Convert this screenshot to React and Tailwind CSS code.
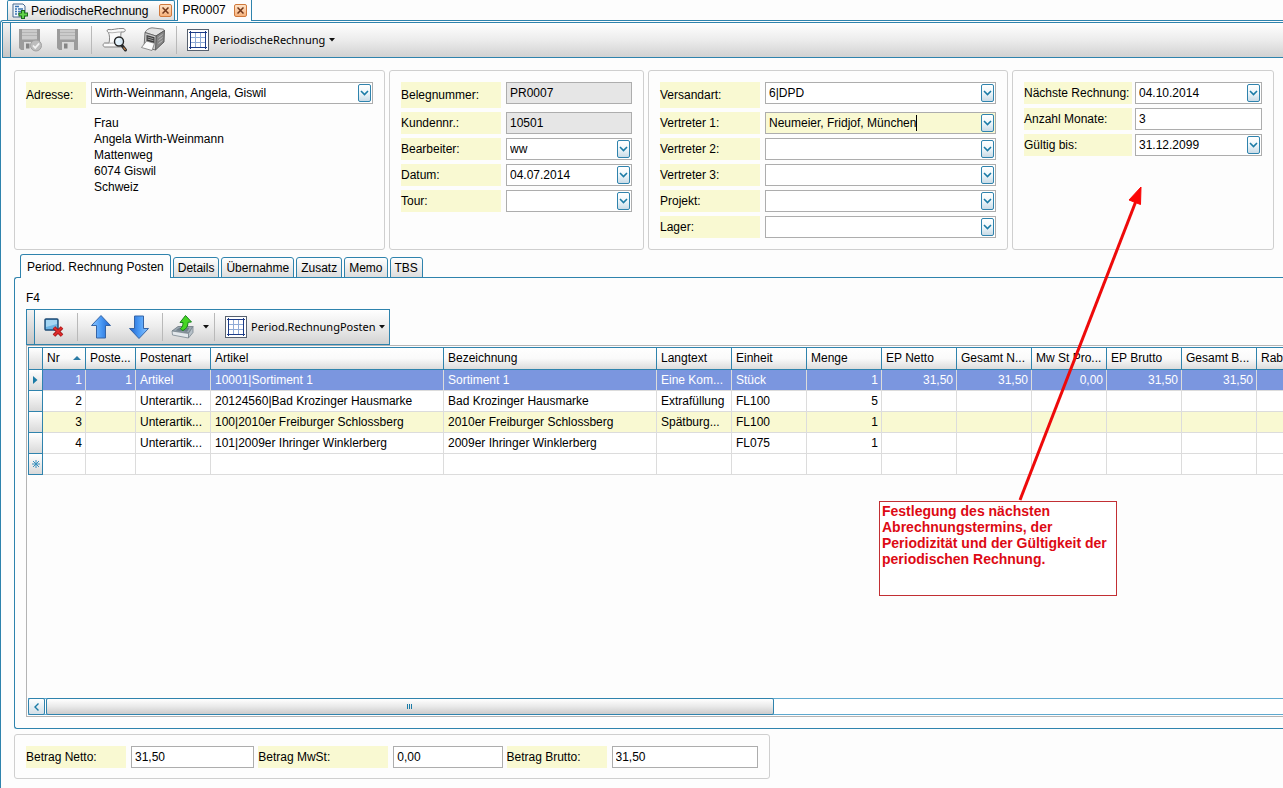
import { useState } from 'react';
import clsx from 'clsx';

const COLUMNS = [
  { key: 'nr', label: 'Nr', width: 43, right: true, sorted: true },
  { key: 'posten', label: 'Poste...', width: 50, right: true },
  { key: 'art', label: 'Postenart', width: 75 },
  { key: 'artikel', label: 'Artikel', width: 233 },
  { key: 'bezeichnung', label: 'Bezeichnung', width: 213 },
  { key: 'langtext', label: 'Langtext', width: 75 },
  { key: 'einheit', label: 'Einheit', width: 75 },
  { key: 'menge', label: 'Menge', width: 75, right: true },
  { key: 'epNetto', label: 'EP Netto', width: 75, right: true },
  { key: 'gesamtNetto', label: 'Gesamt N...', width: 75, right: true },
  { key: 'mwst', label: 'Mw St Pro...', width: 75, right: true },
  { key: 'epBrutto', label: 'EP Brutto', width: 75, right: true },
  { key: 'gesamtBrutto', label: 'Gesamt B...', width: 75, right: true },
  { key: 'rabatt', label: 'Rab', width: 75, right: true },
];

const ROWS = [
  {
    nr: '1',
    posten: '1',
    art: 'Artikel',
    artikel: '10001|Sortiment 1',
    bezeichnung: 'Sortiment 1',
    langtext: 'Eine Kom...',
    einheit: 'Stück',
    menge: '1',
    epNetto: '31,50',
    gesamtNetto: '31,50',
    mwst: '0,00',
    epBrutto: '31,50',
    gesamtBrutto: '31,50',
  },
  {
    nr: '2',
    art: 'Unterartik...',
    artikel: '20124560|Bad Krozinger Hausmarke',
    bezeichnung: 'Bad Krozinger Hausmarke',
    langtext: 'Extrafüllung',
    einheit: 'FL100',
    menge: '5',
  },
  {
    nr: '3',
    art: 'Unterartik...',
    artikel: '100|2010er Freiburger Schlossberg',
    bezeichnung: '2010er Freiburger Schlossberg',
    langtext: 'Spätburg...',
    einheit: 'FL100',
    menge: '1',
  },
  {
    nr: '4',
    art: 'Unterartik...',
    artikel: '101|2009er Ihringer Winklerberg',
    bezeichnung: '2009er Ihringer Winklerberg',
    einheit: 'FL075',
    menge: '1',
  },
];

const TABS = ['Period. Rechnung Posten', 'Details', 'Übernahme', 'Zusatz', 'Memo', 'TBS'];

/* ---------- Icons ---------- */

function Floppy({ checked }) {
  return (
    <svg width="24" height="24" viewBox="0 0 24 24">
      <path d="M1 1h21v21H3l-2-2z" fill="#9c9c9c" />
      <path d="M4 1.500h15v10H4z" fill="#cbcbcb" />
      <path d="M4 4.500h15M4 7.500h15" stroke="#b5b5b5" />
      <path d="M6 14h12v8H6z" fill="#dadada" />
      <path d="M8 15.500h3.500v5H8z" fill="#858585" />
      {checked && (
        <>
          <circle cx="18" cy="17.500" r="5.500" fill="#bdbdbd" stroke="#a2a2a2" />
          <path d="M15 17.500l2.200 2.300 4-4.500" fill="none" stroke="#f2f2f2" strokeWidth="1.800" />
        </>
      )}
    </svg>
  );
}

function PreviewIcon() {
  return (
    <svg width="26" height="26" viewBox="0 0 26 26">
      <path
        d="M6 2.500c4 1 9-1.500 15-1 3 .3 3 3.500 0 3.500h-2c-.5 5 0 9 .5 15H4c-3 .5-4-2.500-1.500-4h4.500C8 12 7.500 8 6.500 5.500c-1.800-.8-1.800-2.500-.5-3z"
        fill="#fafafa"
        stroke="#858585"
      />
      <path d="M7 5.500c4 1 8-.8 12-.5M2.500 16c4 .5 6 0 10 0" stroke="#b3b3b3" fill="none" />
      <path d="M20 18.500l3.500 4.500" stroke="#2b2b2b" strokeWidth="3" strokeLinecap="round" />
      <path d="M21.500 20.500l2 2.500" stroke="#d98a4a" strokeWidth="1.200" />
      <circle cx="17" cy="14.500" r="4.500" fill="#dceefb" fillOpacity=".85" stroke="#222" strokeWidth="1.400" />
      <path d="M14.800 14a2.300 2.300 0 012-1.900" stroke="#fff" fill="none" />
    </svg>
  );
}

function PrinterIcon() {
  return (
    <svg width="26" height="26" viewBox="0 0 26 26">
      <path d="M5 5.500C6 3 9 1 12 .8L22 2c1.500 0 2.500.8 2.500 1.500L16 9z" fill="#e2e2e2" stroke="#666" strokeWidth=".8" />
      <path d="M16 9l8.500-5.500L24 15l-8.500 8z" fill="#858585" stroke="#4a4a4a" strokeWidth=".8" />
      <path d="M5 5.500L16 9l-.5 14L4 20z" fill="#c9c9c9" stroke="#555" strokeWidth=".8" />
      <path d="M6.500 8l8 2.300v6l-8-2z" fill="#3a3a3a" />
      <path d="M7.500 10l6 1.700M7.500 12l6 1.700" stroke="#b5b5b5" strokeWidth=".8" />
      <path d="M6.500 14l8 2.300-2.500 7.200-10.500-3z" fill="#fbfbfb" stroke="#777" strokeWidth=".8" />
      <path d="M18.500 10.500l4-3M18.500 13.500l4-3M18.500 16.500l4-3" stroke="#b9b9b9" />
    </svg>
  );
}

function GridIcon() {
  return (
    <svg width="22" height="22" viewBox="0 0 22 22">
      <rect x=".5" y=".5" width="21" height="21" fill="#fff" stroke="#56606e" />
      <path d="M8.500 4v14M13.500 4v14M4 8.500h14M4 13.500h14" stroke="#8fabd6" />
      <path d="M3.500 2v18M18.500 2v18M2 3.500h18M2 18.500h18" stroke="#1d3c87" />
    </svg>
  );
}

function SheetIcon() {
  return (
    <svg width="16" height="16" viewBox="0 0 16 16">
      <path d="M1 1h10l2 2v11H1z" fill="#f3f8fd" stroke="#47688f" />
      <path d="M3 3.500h4M3 6h2M6 6h5M3 8.500h2M6 8.500h5M3 11h2M6 11h3" stroke="#3d76b3" strokeWidth="1.300" />
      <path d="M11 7v9M6.500 11.500H16" stroke="#1d6b1d" strokeWidth="4" />
      <path d="M11 8v7M7.500 11.500H15" stroke="#62d34a" strokeWidth="2" />
    </svg>
  );
}

function RemoveIcon() {
  return (
    <svg width="22" height="20" viewBox="0 0 22 20">
      <rect x="2" y="2" width="13" height="11" rx="1" fill="#6cb4e4" stroke="#1c4a74" strokeWidth="1.400" />
      <path d="M3 3h11v4L3 10z" fill="#a5d6f3" />
      <path d="M11 10.500l8 8M19 10.500l-8 8" stroke="#8d0f12" strokeWidth="3.600" />
      <path d="M11 10.500l8 8M19 10.500l-8 8" stroke="#dd2a2a" strokeWidth="2.200" />
    </svg>
  );
}

function BigArrow({ down }) {
  return (
    <svg width="22" height="26" viewBox="0 0 22 26" className={clsx(down && 'rotate-180')}>
      <defs>
        <linearGradient id="blueArrow" x1="0" x2="1" y1="0" y2="0">
          <stop offset="0" stopColor="#8cc6ff" />
          <stop offset=".5" stopColor="#4a9af5" />
          <stop offset="1" stopColor="#1f62cc" />
        </linearGradient>
      </defs>
      <path d="M11 1.500l9.500 10H15.500V24h-9V11.500H1.500z" fill="url(#blueArrow)" stroke="#3464a6" strokeLinejoin="round" />
    </svg>
  );
}

function ExportIcon() {
  return (
    <svg width="24" height="26" viewBox="0 0 24 26">
      <path d="M1 17l6-4.500h15L17.500 19z" fill="#9aa7b1" stroke="#6c7882" strokeWidth=".8" />
      <path d="M4.500 16.500l4-2.700h10l-2.500 4z" fill="#71808b" />
      <path d="M1 17l16.500 2.500v4.500L1.500 21z" fill="#e3e8ec" stroke="#7a868f" strokeWidth=".8" />
      <path d="M17.500 19.500L22 12.500v6L17.500 24z" fill="#b7c1c9" stroke="#7a868f" strokeWidth=".8" />
      <path d="M14.500 1.500l6 6.500-3.500.3c0 4-1.500 6.500-5 8.200-1.500-.5-2-1-2.500-2 2-1.500 2.500-3.500 2.500-6H9z" fill="#45d524" stroke="#17821a" />
    </svg>
  );
}

function CaretDown() {
  return (
    <svg width="6" height="4" viewBox="0 0 6 4">
      <path d="M0 0h6L3 3.500z" fill="#111" />
    </svg>
  );
}

function Chevron() {
  return (
    <svg width="9" height="6" viewBox="0 0 9 6">
      <path d="M1 1l3.500 3.500L8 1" fill="none" stroke="#1b7ba6" strokeWidth="1.600" />
    </svg>
  );
}

/* ---------- Form parts ---------- */

const dropClass =
  'flex h-[18px] w-[13px] shrink-0 items-center justify-center rounded-[2px] border border-[#2f83ad] bg-gradient-to-b from-white via-[#eef6fa] to-[#c9dbe6]';

function Field({ id, label, value = '', kind = 'text', labelClass = 'w-[100px]', gap = 'gap-[5px]', tall, active }) {
  return (
    <div className={clsx('flex items-start', gap)}>
      <label
        htmlFor={id}
        className={clsx('flex shrink-0 items-center whitespace-nowrap bg-[#f9f9d2]', labelClass, tall ? 'h-[26px]' : 'h-[22px]')}
      >
        {label}
      </label>
      <div
        className={clsx(
          'relative flex h-[22px] min-w-0 flex-1 items-center border border-[#adadad] pr-px',
          active ? 'bg-[#f9f9d2]' : kind === 'readonly' ? 'bg-[#e6e6e6]' : 'bg-white'
        )}
      >
        {kind === 'select' && (
          <>
            <select id={id} defaultValue={value} className="h-5 w-full appearance-none bg-transparent pl-[3px] pr-4 outline-none">
              <option>{value}</option>
            </select>
            <span className={clsx(dropClass, 'pointer-events-none absolute right-px')}>
              <Chevron />
            </span>
          </>
        )}
        {kind !== 'select' && (
          <input
            id={id}
            defaultValue={value}
            readOnly={kind === 'readonly'}
            className={clsx('h-5 min-w-0 bg-transparent pl-[3px] outline-none', active ? 'field-sizing-content' : 'w-full flex-1')}
          />
        )}
        {active && <span className="mr-auto h-4 w-px bg-black" />}
        {kind === 'combo' && (
          <button type="button" aria-label={`${label} öffnen`} className={dropClass}>
            <Chevron />
          </button>
        )}
      </div>
    </div>
  );
}

function Panel({ children, className }) {
  return <section className={clsx('min-w-0 rounded-[3px] border border-[#cfcfcf] p-[11px]', className)}>{children}</section>;
}

function Separator() {
  return <span className="mx-1 h-7 w-px bg-[#b9b9b9]" />;
}

function ToolButton({ label, children }) {
  return (
    <button type="button" aria-label={label} className="flex h-8 w-[38px] items-center justify-center">
      {children}
    </button>
  );
}

function LayoutButton({ children }) {
  return (
    <button type="button" className="flex h-8 items-center gap-1 pl-1.5 pr-1 font-['Noto_Sans','Open_Sans',sans-serif] text-[11px]">
      <GridIcon />
      <span>{children}</span>
      <CaretDown />
    </button>
  );
}

function Toolbar({ children, className }) {
  return (
    <div className={clsx('flex h-9 items-center border-[#2f83ad] bg-gradient-to-b from-white via-[#ececec] to-[#d2d2d2]', className)}>
      <span className="h-full w-2 shrink-0 border-r border-[#2f83ad] bg-gradient-to-b from-[#f2f2f2] to-[#c6c6c6]" />
      {children}
    </div>
  );
}

function CloseButton({ name }) {
  return (
    <button
      type="button"
      aria-label={`${name} schließen`}
      className="flex size-[13px] items-center justify-center rounded-[2px] border border-[#d0793c] bg-gradient-to-b from-[#ffe3c7] to-[#f6b27c]"
    >
      <svg width="7" height="7" viewBox="0 0 7 7">
        <path d="M.5.5l6 6M6.500.5l-6 6" stroke="#71371a" strokeWidth="1.500" />
      </svg>
    </button>
  );
}

/* ---------- Posten table ---------- */

const rowHeadClass = 'border-b border-x border-[#2f83ad] bg-gradient-to-b from-white to-[#d9d9d9] p-0';

function PostenTable() {
  const [selected, setSelected] = useState(0);

  return (
    <table className="w-[1304px] table-fixed border-separate border-spacing-0">
      <colgroup>
        <col className="w-[15px]" />
        {COLUMNS.map((c) => (
          <col key={c.key} style={{ width: c.width }} />
        ))}
      </colgroup>
      <thead>
        <tr className="h-[23px]">
          <th className={clsx(rowHeadClass, 'border-t')} />
          {COLUMNS.map((c) => (
            <th
              key={c.key}
              scope="col"
              className="overflow-hidden whitespace-nowrap border-y border-r border-[#2f83ad] bg-gradient-to-b from-white via-[#fafafa] to-[#dcdcdc] px-1 pb-px pt-0 text-left font-normal"
            >
              <span className="flex items-center justify-between">
                {c.label}
                {c.sorted && (
                  <svg width="8" height="4" viewBox="0 0 8 4">
                    <path d="M0 4l4-4 4 4z" fill="#2b7ba5" />
                  </svg>
                )}
              </span>
            </th>
          ))}
        </tr>
      </thead>
      <tbody>
        {ROWS.map((row, i) => (
          <tr
            key={row.nr}
            onClick={() => setSelected(i)}
            className={clsx('h-[21px]', selected === i ? 'bg-[#7b96df] text-white' : i % 2 === 0 ? 'bg-[#f9f9d2]' : 'bg-white')}
          >
            <td className={rowHeadClass}>
              {selected === i && (
                <svg width="5" height="8" viewBox="0 0 5 8" className="mx-auto">
                  <path d="M0 0l4.500 4L0 8z" fill="#1b7ba6" />
                </svg>
              )}
            </td>
            {COLUMNS.map((c) => (
              <td
                key={c.key}
                className={clsx('overflow-hidden whitespace-nowrap border-b border-r border-[#dcdcdc] py-0 pl-1 pr-[3px]', c.right && 'text-right')}
              >
                {row[c.key]}
              </td>
            ))}
          </tr>
        ))}
        <tr className="h-[21px] bg-white">
          <td className={rowHeadClass}>
            <svg width="8" height="8" viewBox="0 0 8 8" className="mx-auto">
              <path d="M4 0v8M0 4h8M1 1l6 6M7 1L1 7" stroke="#3a90bd" />
            </svg>
          </td>
          {COLUMNS.map((c) => (
            <td key={c.key} className="border-b border-r border-[#dcdcdc] p-0" />
          ))}
        </tr>
      </tbody>
    </table>
  );
}

function ScrollBar() {
  return (
    <div className="flex h-[17px] border-y border-[#5fa9cf] bg-white">
      <button
        type="button"
        aria-label="Nach links"
        className="-my-px flex w-[17px] items-center justify-center rounded-[2px] border border-[#2f83ad] bg-gradient-to-b from-white to-[#d2dfe7]"
      >
        <svg width="5" height="8" viewBox="0 0 5 8">
          <path d="M4.500.5L1 4l3.500 3.500" fill="none" stroke="#1b7ba6" strokeWidth="1.400" />
        </svg>
      </button>
      <div className="-my-px ml-px flex w-[58%] items-center justify-center gap-px rounded-[2px] border border-[#2f83ad] bg-gradient-to-b from-white via-[#e9e9e9] to-[#cccccc]">
        <span className="h-[5px] w-px bg-[#1b7ba6]" />
        <span className="h-[5px] w-px bg-[#1b7ba6]" />
        <span className="h-[5px] w-px bg-[#1b7ba6]" />
      </div>
    </div>
  );
}

/* ---------- Note with arrow ---------- */

function Note() {
  return (
    <aside className="pointer-events-none absolute left-[879px] top-[185px] w-[270px]">
      <svg width="270" height="316" viewBox="0 0 270 316">
        <path d="M141 315L257 16" stroke="#ee0a0a" strokeWidth="3" />
        <path d="M262 2l-12 13 11.500 4.500z" fill="#fb0505" stroke="#fb0505" />
      </svg>
      <p className="h-[95px] w-[238px] whitespace-nowrap border border-[#c22f33] bg-white px-[2px] pt-px text-[14px] font-bold leading-4 text-[#dd0a14]">
        Festlegung des nächsten
        <br />
        Abrechnungstermins, der
        <br />
        Periodizität und der Gültigkeit der
        <br />
        periodischen Rechnung.
      </p>
    </aside>
  );
}

export default function App() {
  const [tab, setTab] = useState(TABS[0]);

  return (
    <div className="relative flex min-h-screen flex-col overflow-hidden bg-[#fdfdfd] font-['Liberation_Sans',Arial,sans-serif] text-[12px] leading-4 text-black">
      {/* Document tabs */}
      <nav className="flex h-5 items-stretch gap-[2px] pl-[7px]">
        <div className="flex items-center gap-[3px] rounded-t-[2px] border-x border-t border-[#2f83ad] bg-gradient-to-b from-white to-[#dedede] pl-1 pr-[2px]">
          <SheetIcon />
          <button type="button" className="mr-2">PeriodischeRechnung</button>
          <CloseButton name="PeriodischeRechnung" />
        </div>
        <div className="relative z-10 -mb-px flex items-center gap-2 border-x border-[#2f83ad] bg-[#fdfdfd] px-1 pb-px">
          <button type="button">PR0007</button>
          <CloseButton name="PR0007" />
        </div>
      </nav>

      <main className="flex flex-1 flex-col rounded-tl-[3px] border-l border-t border-[#2f83ad] pb-[9px] pl-px pt-px">
        <Toolbar className="border-y border-l">
          <ToolButton label="Speichern und schließen">
            <Floppy checked />
          </ToolButton>
          <ToolButton label="Speichern">
            <Floppy />
          </ToolButton>
          <Separator />
          <ToolButton label="Vorschau">
            <PreviewIcon />
          </ToolButton>
          <ToolButton label="Drucken">
            <PrinterIcon />
          </ToolButton>
          <Separator />
          <LayoutButton>PeriodischeRechnung</LayoutButton>
        </Toolbar>

        {/* Head data */}
        <div className="ml-3 mr-[9px] mt-3 grid h-[180px] grid-cols-[minmax(0,371fr)_minmax(0,255fr)_minmax(0,360fr)_minmax(0,262fr)] gap-1">
          <Panel>
            <Field id="adresse" label="Adresse:" value="Wirth-Weinmann, Angela, Giswil" kind="select" labelClass="w-[60px]" tall />
            <address className="ml-[68px] mt-[7px] not-italic">
              Frau
              <br />
              Angela Wirth-Weinmann
              <br />
              Mattenweg
              <br />
              6074 Giswil
              <br />
              Schweiz
            </address>
          </Panel>

          <Panel className="flex flex-col gap-1">
            <Field id="beleg" label="Belegnummer:" value="PR0007" kind="readonly" tall />
            <Field id="kunde" label="Kundennr.:" value="10501" kind="readonly" />
            <Field id="bearbeiter" label="Bearbeiter:" value="ww" kind="select" />
            <Field id="datum" label="Datum:" value="04.07.2014" kind="combo" />
            <Field id="tour" label="Tour:" kind="select" />
          </Panel>

          <Panel className="flex flex-col gap-1">
            <Field id="versandart" label="Versandart:" value="6|DPD" kind="select" tall />
            <Field id="vertreter1" label="Vertreter 1:" value="Neumeier, Fridjof, München" kind="combo" active />
            <Field id="vertreter2" label="Vertreter 2:" kind="select" />
            <Field id="vertreter3" label="Vertreter 3:" kind="select" />
            <Field id="projekt" label="Projekt:" kind="select" />
            <Field id="lager" label="Lager:" kind="select" />
          </Panel>

          <Panel className="flex flex-col gap-1">
            <Field id="naechste" label="Nächste Rechnung:" value="04.10.2014" kind="combo" labelClass="w-[108px]" gap="gap-[3px]" />
            <Field id="monate" label="Anzahl Monate:" value="3" labelClass="w-[108px]" gap="gap-[3px]" />
            <Field id="gueltig" label="Gültig bis:" value="31.12.2099" kind="combo" labelClass="w-[108px]" gap="gap-[3px]" />
          </Panel>
        </div>

        {/* Detail tabs */}
        <div className="relative z-10 -mb-px ml-[18px] mt-1 flex h-6 items-end gap-[2px]" role="tablist">
          {TABS.map((t) => (
            <button
              key={t}
              type="button"
              role="tab"
              aria-selected={tab === t}
              onClick={() => setTab(t)}
              className={clsx(
                'whitespace-nowrap rounded-t-[3px] border-x border-t border-[#2f83ad]',
                tab === t ? 'h-6 bg-[#fdfdfd] px-1.5' : 'h-[21px] border-b bg-gradient-to-b from-white to-[#dddddd] px-1'
              )}
            >
              {t}
            </button>
          ))}
        </div>

        <section className="ml-3 flex flex-1 flex-col rounded-l-[3px] border-y border-l border-[#2f83ad] pb-[11px] pl-[11px] pt-3">
          <h2 className="mb-[3px]">F4</h2>
          <Toolbar className="w-fit border">
            <ToolButton label="Posten löschen">
              <RemoveIcon />
            </ToolButton>
            <Separator />
            <ToolButton label="Nach oben">
              <BigArrow />
            </ToolButton>
            <ToolButton label="Nach unten">
              <BigArrow down />
            </ToolButton>
            <Separator />
            <button type="button" aria-label="Exportieren" className="flex h-8 items-center gap-2 pl-1 pr-px">
              <ExportIcon />
              <CaretDown />
            </button>
            <Separator />
            <LayoutButton>Period.RechnungPosten</LayoutButton>
          </Toolbar>
          <div className="flex flex-1 flex-col justify-between overflow-hidden border-y border-l border-[#b4b4b4] bg-[#fdfdfd] pb-px pl-px pt-px">
            <PostenTable />
            <ScrollBar />
          </div>
        </section>

        {/* Totals */}
        <Panel className="ml-3 mt-[5px] grid w-[59%] grid-cols-[minmax(0,228fr)_minmax(0,244fr)_minmax(0,251fr)] gap-1 pb-[10px]">
          <Field id="netto" label="Betrag Netto:" value="31,50" />
          <Field id="mwst" label="Betrag MwSt:" value="0,00" labelClass="w-[130px]" />
          <Field id="brutto" label="Betrag Brutto:" value="31,50" />
        </Panel>
      </main>

      <Note />
    </div>
  );
}
